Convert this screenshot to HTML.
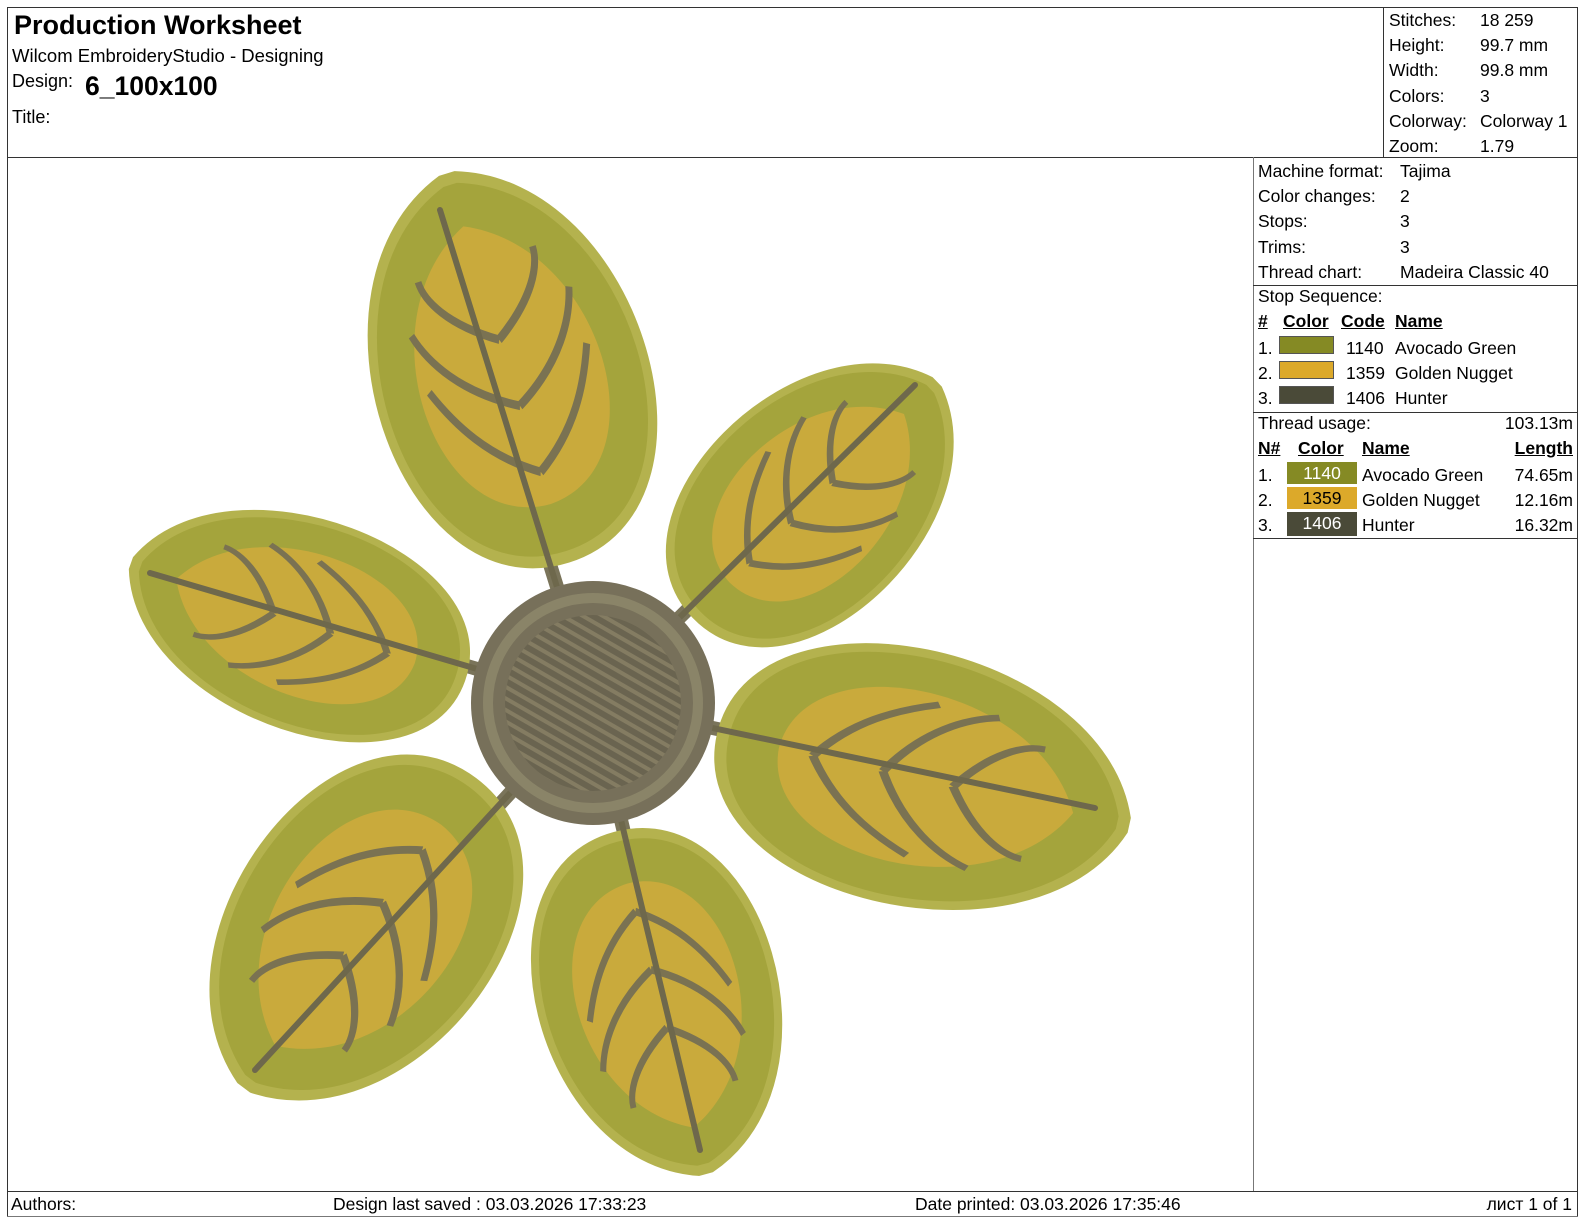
<!DOCTYPE html>
<html><head><meta charset="utf-8"><style>
*{margin:0;padding:0;box-sizing:border-box}
body{width:1584px;height:1224px;background:#fff;font-family:"Liberation Sans",Arial,sans-serif;color:#000;position:relative;overflow:hidden}
.a{position:absolute;white-space:nowrap;font-size:17.5px;line-height:20px}
.b{position:absolute;background:#333}
.sw{position:absolute;height:18px;border:1px solid #555}
u{text-decoration:underline}
</style></head><body>
<div class="b" style="left:7px;top:7px;width:1571px;height:1px"></div>
<div class="b" style="left:7px;top:7px;width:1px;height:1210px"></div>
<div class="b" style="left:1577px;top:7px;width:1px;height:1210px"></div>
<div class="b" style="left:7px;top:157px;width:1571px;height:1px"></div>
<div class="b" style="left:1383px;top:7px;width:1px;height:150px"></div>
<div class="b" style="left:1253px;top:157px;width:1px;height:1034px;background:#777"></div>
<div class="b" style="left:1253px;top:285px;width:324px;height:1px"></div>
<div class="b" style="left:1253px;top:412px;width:324px;height:1px"></div>
<div class="b" style="left:1253px;top:538px;width:324px;height:1px"></div>
<div class="b" style="left:7px;top:1191px;width:1571px;height:1px"></div>
<div class="b" style="left:7px;top:1216px;width:1571px;height:1px;background:#777"></div>

<div class="a" style="left:14px;top:10px;font-size:27px;line-height:30px;font-weight:bold">Production Worksheet</div>
<div class="a" style="left:12px;top:46px;font-size:18.5px">Wilcom EmbroideryStudio - Designing</div>
<div class="a" style="left:12px;top:71px;font-size:18px">Design:</div>
<div class="a" style="left:85px;top:71px;font-size:26.5px;line-height:30px;font-weight:bold">6_100x100</div>
<div class="a" style="left:12px;top:107px;font-size:18px">Title:</div>

<div class="a" style="left:1389px;top:8px;line-height:25.2px">Stitches:<br>Height:<br>Width:<br>Colors:<br>Colorway:<br>Zoom:</div>
<div class="a" style="left:1480px;top:8px;line-height:25.2px">18 259<br>99.7 mm<br>99.8 mm<br>3<br>Colorway 1<br>1.79</div>

<div class="a" style="left:1258px;top:159px;line-height:25.2px">Machine format:<br>Color changes:<br>Stops:<br>Trims:<br>Thread chart:</div>
<div class="a" style="left:1400px;top:159px;line-height:25.2px">Tajima<br>2<br>3<br>3<br>Madeira Classic 40</div>

<div class="a" style="left:1258px;top:286px">Stop Sequence:</div>
<div class="a" style="left:1258px;top:311px;font-weight:bold"><u>#</u></div>
<div class="a" style="left:1283px;top:311px;font-weight:bold"><u>Color</u></div>
<div class="a" style="left:1341px;top:311px;font-weight:bold"><u>Code</u></div>
<div class="a" style="left:1395px;top:311px;font-weight:bold"><u>Name</u></div>
<div class="a" style="left:1258px;top:336px;line-height:25.2px">1.<br>2.<br>3.</div>
<div class="sw" style="left:1279px;top:336px;width:55px;background:#858a24"></div>
<div class="sw" style="left:1279px;top:361px;width:55px;background:#dca92a"></div>
<div class="sw" style="left:1279px;top:386px;width:55px;background:#4a4a38"></div>
<div class="a" style="left:1346px;top:336px;line-height:25.2px">1140<br>1359<br>1406</div>
<div class="a" style="left:1395px;top:336px;line-height:25.2px">Avocado Green<br>Golden Nugget<br>Hunter</div>

<div class="a" style="left:1258px;top:413px">Thread usage:</div>
<div class="a" style="right:11px;top:413px">103.13m</div>
<div class="a" style="left:1258px;top:438px;font-weight:bold"><u>N#</u></div>
<div class="a" style="left:1298px;top:438px;font-weight:bold"><u>Color</u></div>
<div class="a" style="left:1362px;top:438px;font-weight:bold"><u>Name</u></div>
<div class="a" style="right:11px;top:438px;font-weight:bold"><u>Length</u></div>
<div class="a" style="left:1258px;top:463px;line-height:25.2px">1.<br>2.<br>3.</div>
<div class="a" style="left:1287px;top:462px;width:70px;height:22px;background:#858a24;color:#fff;text-align:center;line-height:22px">1140</div>
<div class="a" style="left:1287px;top:487px;width:70px;height:22px;background:#dca92a;color:#000;text-align:center;line-height:22px">1359</div>
<div class="a" style="left:1287px;top:512px;width:70px;height:24px;background:#4a4a38;color:#fff;text-align:center;line-height:22px">1406</div>
<div class="a" style="left:1362px;top:463px;line-height:25.2px">Avocado Green<br>Golden Nugget<br>Hunter</div>
<div class="a" style="right:11px;top:463px;line-height:25.2px;text-align:right">74.65m<br>12.16m<br>16.32m</div>

<div class="a" style="left:11px;top:1194px">Authors:</div>
<div class="a" style="left:333px;top:1194px">Design last saved : 03.03.2026 17:33:23</div>
<div class="a" style="left:915px;top:1194px">Date printed: 03.03.2026 17:35:46</div>
<div class="a" style="right:12px;top:1194px">лист 1 of 1</div>

<svg style="position:absolute;left:0;top:0" width="1250" height="1190">
<defs>
<path id="lf" d="M-1,0 C-1,-1.15 0.7,-1.2 1,-0.05 L1,0.05 C0.7,1.2 -1,1.15 -1,0Z"/>
<path id="li" d="M-0.72,0 C-0.7,-0.8 0.45,-0.85 0.75,0 C0.45,0.85 -0.7,0.8 -0.72,0Z"/>
<pattern id="hp" width="10" height="10" patternUnits="userSpaceOnUse" patternTransform="rotate(30)"><rect width="10" height="10" fill="#6a6450"/><rect width="10" height="4" fill="#847c62"/></pattern>
<g id="leaf">
<use href="#lf" fill="#a4a43c" stroke="#b4b24e" stroke-width="0.06"/>
<use href="#li" fill="#c9aa3c"/>
<path d="M-0.55,0 C-0.4,-0.3 -0.2,-0.45 0,-0.55 M-0.2,0 C-0.05,-0.35 0.15,-0.5 0.3,-0.55 M0.15,0 C0.3,-0.3 0.45,-0.4 0.55,-0.4 M-0.55,0 C-0.4,0.3 -0.2,0.45 0,0.55 M-0.2,0 C-0.05,0.35 0.15,0.5 0.3,0.55 M0.15,0 C0.3,0.3 0.45,0.4 0.55,0.4" fill="none" stroke="#7a7252" stroke-width="0.045"/>
</g>
</defs>
<g stroke="#7a745a" stroke-width="14" stroke-linecap="round">
<line x1="593" y1="703" x2="440" y2="210"/>
<line x1="593" y1="703" x2="915" y2="385"/>
<line x1="593" y1="703" x2="150" y2="573"/>
<line x1="593" y1="703" x2="1095" y2="808"/>
<line x1="593" y1="703" x2="255" y2="1070"/>
<line x1="593" y1="703" x2="700" y2="1150"/>
</g>
<g transform="translate(508,368) rotate(-107.5) scale(198,150)"><use href="#leaf"/></g>
<g transform="translate(815,500) rotate(-44) scale(165,122)"><use href="#leaf"/></g>
<g transform="translate(298,622) rotate(-160.6) scale(172,116)"><use href="#leaf"/></g>
<g transform="translate(923,780) rotate(12.4) scale(205,140)"><use href="#leaf"/></g>
<g transform="translate(360,933) rotate(126.9) scale(188,145)"><use href="#leaf"/></g>
<g transform="translate(660,1003) rotate(75) scale(172,132)"><use href="#leaf"/></g>
<g stroke="#6e684c" stroke-width="6" stroke-linecap="round">
<line x1="593" y1="703" x2="440" y2="210"/>
<line x1="593" y1="703" x2="915" y2="385"/>
<line x1="593" y1="703" x2="150" y2="573"/>
<line x1="593" y1="703" x2="1095" y2="808"/>
<line x1="593" y1="703" x2="255" y2="1070"/>
<line x1="593" y1="703" x2="700" y2="1150"/>
</g>
<circle cx="593" cy="703" r="122" fill="#77705a"/>
<circle cx="593" cy="703" r="105" fill="none" stroke="#8a8468" stroke-width="10"/>
<circle cx="593" cy="703" r="88" fill="url(#hp)"/>
</svg>
</body></html>
